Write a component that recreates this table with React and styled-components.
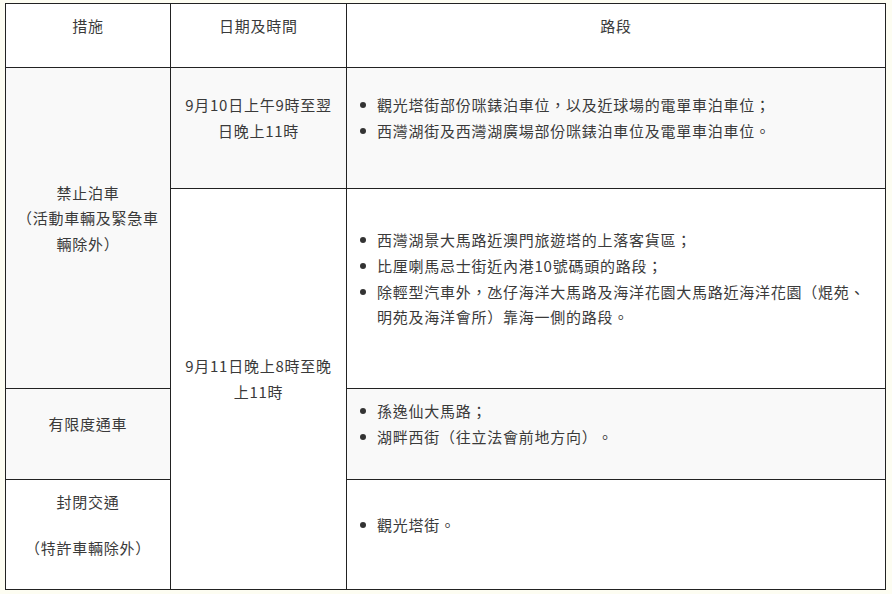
import React from "react";
import styled, { createGlobalStyle } from "styled-components";

const Global = createGlobalStyle`
  html, body { margin: 0; padding: 0; }
  body {
    background: #fdfdf2;
    font-family: "Noto Sans CJK TC", "Noto Sans", sans-serif;
    color: #3a3a3a;
  }
`;

const Page = styled.div`
  padding: 3px 0 0 5px;
`;

const Table = styled.table`
  border-collapse: collapse;
  width: 880px;
  table-layout: fixed;
  font-size: 15px;
  line-height: 25.6px;
  letter-spacing: 0.75px;
  color: #3a3a3a;
  text-spacing-trim: space-all;
`;

const Row = styled.tr`
  height: ${(p) => p.$h}px;
`;

const HeadCell = styled.th`
  border: 1px solid #222;
  background: #fff;
  font-weight: normal;
  text-align: center;
  vertical-align: middle;
  padding: 0 10px 20px;
`;

const Cell = styled.td`
  border: 1px solid #222;
  background: ${(p) => (p.$shade ? "#f9f9f9" : "#fff")};
  text-align: ${(p) => (p.$left ? "left" : "center")};
  vertical-align: middle;
  padding: 0 10px 20px;
`;

const Para = styled.p`
  margin: 0;
  & + & { margin-top: 20.4px; }
`;

const List = styled.ul`
  margin: 0;
  padding: 0 0 0 20px;
  list-style: none;
`;

const Item = styled.li`
  position: relative;
  &::before {
    content: "";
    position: absolute;
    left: -17px;
    top: 10px;
    width: 6px;
    height: 6px;
    border-radius: 50%;
    background: #333;
  }
`;

export default function App() {
  return (
    <>
      <Global />
      <Page lang="zh-Hant">
        <Table>
          <colgroup>
            <col style={{ width: 165 }} />
            <col style={{ width: 176 }} />
            <col style={{ width: 539 }} />
          </colgroup>
          <thead>
            <Row $h={64}>
              <HeadCell>措施</HeadCell>
              <HeadCell>日期及時間</HeadCell>
              <HeadCell>路段</HeadCell>
            </Row>
          </thead>
          <tbody>
            <Row $h={121}>
              <Cell $shade rowSpan={2}>
                禁止泊車
                <br />
                （活動車輛及緊急車輛除外）
              </Cell>
              <Cell $shade>9月10日上午9時至翌日晚上11時</Cell>
              <Cell $shade $left>
                <List>
                  <Item>觀光塔街部份咪錶泊車位，以及近球場的電單車泊車位；</Item>
                  <Item>西灣湖街及西灣湖廣場部份咪錶泊車位及電單車泊車位。</Item>
                </List>
              </Cell>
            </Row>
            <Row $h={200}>
              <Cell rowSpan={3}>9月11日晚上8時至晚上11時</Cell>
              <Cell $left>
                <List>
                  <Item>西灣湖景大馬路近澳門旅遊塔的上落客貨區；</Item>
                  <Item>比厘喇馬忌士街近內港10號碼頭的路段；</Item>
                  <Item>
                    除輕型汽車外，氹仔海洋大馬路及海洋花園大馬路近海洋花園（焜苑、明苑及海洋會所）靠海一側的路段。
                  </Item>
                </List>
              </Cell>
            </Row>
            <Row $h={91}>
              <Cell $shade>有限度通車</Cell>
              <Cell $shade $left>
                <List>
                  <Item>孫逸仙大馬路；</Item>
                  <Item>湖畔西街（往立法會前地方向）。</Item>
                </List>
              </Cell>
            </Row>
            <Row $h={110}>
              <Cell>
                <Para>封閉交通</Para>
                <Para>（特許車輛除外）</Para>
              </Cell>
              <Cell $left>
                <List>
                  <Item>觀光塔街。</Item>
                </List>
              </Cell>
            </Row>
          </tbody>
        </Table>
      </Page>
    </>
  );
}
